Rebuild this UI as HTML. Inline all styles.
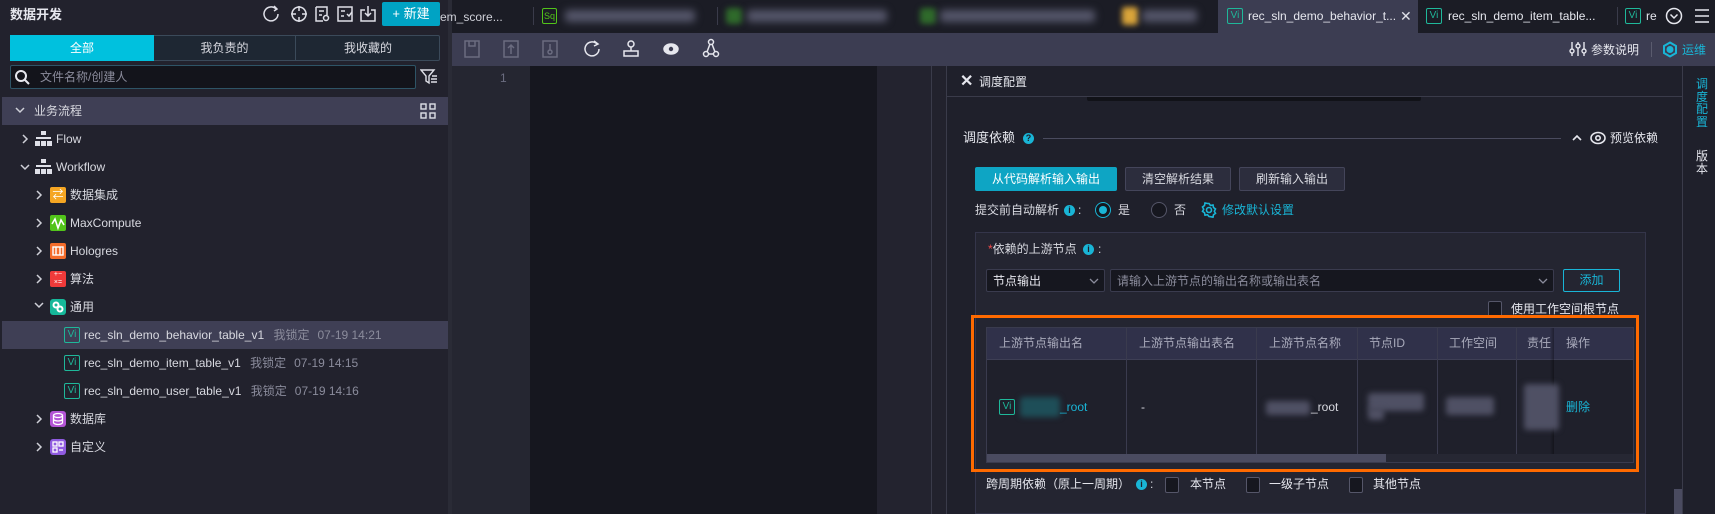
<!DOCTYPE html>
<html><head><meta charset="utf-8"><style>
*{margin:0;padding:0;box-sizing:border-box}
body{width:1715px;height:514px;overflow:hidden;background:#1f2029;font-family:"Liberation Sans","Noto Sans CJK SC",sans-serif;font-size:12px;color:#d8d9e0;position:relative}
.a{position:absolute}
.t{position:absolute;white-space:nowrap;line-height:1}
.vi{position:absolute;width:16px;height:16px;border:1px solid #1fb89a;border-radius:2px;color:#1fb89a;font-size:10px;line-height:14px;text-align:center}
.arr{position:absolute;color:#cfd0d8;font-size:11px}
.blur{position:absolute;background:#55566a;filter:blur(3px);border-radius:3px}
.cb{position:absolute;width:14px;height:16px;border:1px solid #555669;border-radius:2px;background:#16171f}
.th{position:absolute;top:327px;height:33px;line-height:33px;color:#a9aabb;font-size:12px}
</style></head><body>
<div class="a" style="left:0;top:0;width:448px;height:514px;background:#22222d"></div>
<div class="a" style="left:448px;top:0;width:4px;height:514px;background:#2a2b36"></div>
<div class="t" style="left:10px;top:8px;font-size:13px;font-weight:bold;color:#e6e7ee">数据开发</div>
<svg class="a" style="left:262px;top:4px" width="120" height="20" fill="none" stroke="#dfe0e8" stroke-width="1.5">
<path d="M14 5a7 7 0 1 0 2 5"/><path d="M12 2l3 3-3 2"/>
<circle cx="37" cy="10" r="7"/><path d="M37 2v5M37 13v5M29 10h5M40 10h5"/>
<path d="M54 3h11v8M54 3v14h7M57 7h5M57 11h3"/><circle cx="64" cy="14" r="2.5"/>
<rect x="76" y="3" width="14" height="14"/><path d="M79 7h4M79 12h3M85 10l2 2 3-4"/>
<path d="M103 6h-4v11h14V6h-4M106 2v10M103 9l3 3 3-3"/>
</svg>
<div class="a" style="left:382px;top:2px;width:58px;height:24px;background:#00a3c4;border-radius:2px;color:#fff;font-size:13px;line-height:24px;text-align:center">+ 新建</div>
<div class="a" style="left:10px;top:35px;width:430px;height:26px;border:1px solid #3b4a5a;background:#1e2733;border-radius:2px"></div>
<div class="a" style="left:10px;top:35px;width:144px;height:26px;background:#00c1de;color:#fff;text-align:center;line-height:26px;font-size:12px">全部</div>
<div class="a" style="left:154px;top:35px;width:142px;height:26px;border-right:1px solid #3b4a5a;text-align:center;line-height:26px">我负责的</div>
<div class="a" style="left:296px;top:35px;width:144px;height:26px;text-align:center;line-height:26px">我收藏的</div>
<div class="a" style="left:10px;top:65px;width:406px;height:24px;border:1px solid #2e5466;background:#13141b;border-radius:2px"></div>
<svg class="a" style="left:14px;top:69px" width="16" height="16" fill="none" stroke="#e6e7ee" stroke-width="2"><circle cx="7" cy="7" r="5"/><path d="M11 11l4 4"/></svg>
<div class="t" style="left:40px;top:71px;color:#8b8c9c">文件名称/创建人</div>
<svg class="a" style="left:420px;top:69px" width="18" height="16" fill="none" stroke="#dfe0e8" stroke-width="1.4"><path d="M1 1h13l-5 6v7l-3-2V7z"/><path d="M11 10h6M11 13h6M12 7h5"/></svg>
<div class="a" style="left:2px;top:97px;width:446px;height:28px;background:#3f3f55"></div>
<svg class="a" style="left:14px;top:104px" width="12" height="12" fill="none" stroke="#cfd0d8" stroke-width="1.5"><path d="M2 4l4 4 4-4"/></svg>
<div class="t" style="left:34px;top:105px;font-size:12px">业务流程</div>
<svg class="a" style="left:420px;top:103px" width="16" height="16" fill="none" stroke="#dfe0e8" stroke-width="1.4"><rect x="1" y="1" width="5" height="5"/><rect x="10" y="1" width="5" height="5"/><rect x="1" y="10" width="5" height="5"/><rect x="10" y="10" width="5" height="5"/></svg>
<svg class="a" style="left:0;top:120px" width="100" height="340" fill="none" stroke="#cfd0d8" stroke-width="1.5">
<path d="M23 15l4 4-4 4"/><path d="M21 45l4 4 4-4"/>
<path d="M37 71l4 4-4 4"/><path d="M37 99l4 4-4 4"/><path d="M37 127l4 4-4 4"/><path d="M37 155l4 4-4 4"/><path d="M35 183l4 4 4-4"/>
<path d="M37 295l4 4-4 4"/><path d="M37 323l4 4-4 4"/>
</svg>
<svg class="a" style="left:35px;top:131px" width="17" height="44" fill="#dfe0e8"><rect x="6" y="0" width="5" height="4"/><rect x="1" y="6" width="15" height="2"/><rect x="0" y="10" width="5" height="5"/><rect x="6" y="10" width="5" height="5"/><rect x="12" y="10" width="5" height="5"/>
<g transform="translate(0,28)"><rect x="6" y="0" width="5" height="4"/><rect x="1" y="6" width="15" height="2"/><rect x="0" y="10" width="5" height="5"/><rect x="6" y="10" width="5" height="5"/><rect x="12" y="10" width="5" height="5"/></g></svg>
<div class="t" style="left:56px;top:133px">Flow</div>
<div class="t" style="left:56px;top:161px">Workflow</div>
<div class="a" style="left:50px;top:187px;width:16px;height:16px;background:#f5a623;border-radius:2px;color:#fff;font-size:11px;line-height:16px;text-align:center">⇄</div>
<div class="t" style="left:70px;top:189px">数据集成</div>
<div class="a" style="left:50px;top:215px;width:16px;height:16px;background:#52c41a;border-radius:2px"></div>
<svg class="a" style="left:50px;top:215px" width="16" height="16" fill="none" stroke="#fff" stroke-width="1.6"><path d="M2 9l3-5 3 9 3-8 3 5"/></svg>
<div class="t" style="left:70px;top:217px">MaxCompute</div>
<div class="a" style="left:50px;top:243px;width:16px;height:16px;background:#f56c2a;border-radius:2px"></div>
<svg class="a" style="left:50px;top:243px" width="16" height="16" fill="none" stroke="#fff" stroke-width="1.4"><rect x="3" y="4" width="10" height="8"/><path d="M6 4v8M10 4v8"/></svg>
<div class="t" style="left:70px;top:245px">Hologres</div>
<div class="a" style="left:50px;top:271px;width:16px;height:16px;background:#f03a3a;border-radius:2px;color:#fff;font-size:7px;line-height:8px;text-align:center">+−<br>×=</div>
<div class="t" style="left:70px;top:273px">算法</div>
<div class="a" style="left:50px;top:299px;width:16px;height:16px;background:#16b89a;border-radius:3px"></div>
<svg class="a" style="left:50px;top:299px" width="16" height="16" fill="none" stroke="#fff" stroke-width="2"><circle cx="6" cy="6" r="2.5"/><circle cx="10" cy="10" r="2.5"/></svg>
<div class="t" style="left:70px;top:301px">通用</div>
<div class="a" style="left:2px;top:321px;width:446px;height:28px;background:#3f3f55"></div>
<div class="vi" style="left:64px;top:327px">Vi</div>
<div class="t" style="left:84px;top:329px">rec_sln_demo_behavior_table_v1 <span style="color:#8b8c9c;margin-left:6px">我锁定</span><span style="color:#8b8c9c;margin-left:8px">07-19 14:21</span></div>
<div class="vi" style="left:64px;top:355px">Vi</div>
<div class="t" style="left:84px;top:357px">rec_sln_demo_item_table_v1 <span style="color:#8b8c9c;margin-left:6px">我锁定</span><span style="color:#8b8c9c;margin-left:8px">07-19 14:15</span></div>
<div class="vi" style="left:64px;top:383px">Vi</div>
<div class="t" style="left:84px;top:385px">rec_sln_demo_user_table_v1 <span style="color:#8b8c9c;margin-left:6px">我锁定</span><span style="color:#8b8c9c;margin-left:8px">07-19 14:16</span></div>
<div class="a" style="left:50px;top:411px;width:16px;height:16px;background:#b455d6;border-radius:3px"></div>
<svg class="a" style="left:50px;top:411px" width="16" height="16" fill="none" stroke="#fff" stroke-width="1.3"><ellipse cx="8" cy="4.5" rx="4.5" ry="2"/><path d="M3.5 4.5v7c0 1 2 2 4.5 2s4.5-1 4.5-2v-7M3.5 8c0 1 2 2 4.5 2s4.5-1 4.5-2"/></svg>
<div class="t" style="left:70px;top:413px">数据库</div>
<div class="a" style="left:50px;top:439px;width:16px;height:16px;background:#8f5be0;border-radius:3px"></div>
<svg class="a" style="left:50px;top:439px" width="16" height="16" fill="none" stroke="#fff" stroke-width="1.3"><rect x="3" y="3" width="4" height="4"/><rect x="9" y="3" width="4" height="4"/><rect x="3" y="9" width="4" height="4"/><path d="M9 11h4"/></svg>
<div class="t" style="left:70px;top:441px">自定义</div>
<div class="a" style="left:452px;top:0;width:1263px;height:33px;background:#1b1c25"></div>
<div class="t" style="left:440px;top:11px;color:#cfd0d8">em_score...</div>
<div class="a" style="left:533px;top:7px;width:1px;height:18px;background:#3a3b4a"></div>
<div class="a" style="left:542px;top:8px;width:15px;height:16px;border:1px solid #52c41a;border-radius:2px;color:#52c41a;font-size:9px;line-height:14px;text-align:center">Sq</div>
<div class="blur" style="left:565px;top:10px;width:130px;height:12px;filter:blur(4px)"></div>
<div class="a" style="left:717px;top:7px;width:1px;height:18px;background:#3a3b4a"></div>
<div class="blur" style="left:726px;top:8px;width:16px;height:16px;background:#2f6a2b"></div>
<div class="blur" style="left:747px;top:10px;width:140px;height:12px;filter:blur(4px)"></div>
<div class="blur" style="left:920px;top:8px;width:16px;height:16px;background:#2f6a2b"></div>
<div class="blur" style="left:940px;top:10px;width:155px;height:12px;filter:blur(4px)"></div>
<div class="blur" style="left:1122px;top:7px;width:16px;height:18px;background:#d9a43a"></div>
<div class="blur" style="left:1142px;top:10px;width:55px;height:12px;filter:blur(4px)"></div>
<div class="a" style="left:1218px;top:0;width:200px;height:33px;background:#3c3d52"></div>
<div class="vi" style="left:1227px;top:8px">Vi</div>
<div class="t" style="left:1248px;top:10px;color:#e6e7ee">rec_sln_demo_behavior_t...</div>
<div class="t" style="left:1400px;top:9px;color:#dfe0e8;font-size:14px">✕</div>
<div class="vi" style="left:1426px;top:8px">Vi</div>
<div class="t" style="left:1448px;top:10px;color:#e6e7ee">rec_sln_demo_item_table...</div>
<div class="a" style="left:1617px;top:7px;width:1px;height:18px;background:#3a3b4a"></div>
<div class="vi" style="left:1625px;top:8px">Vi</div>
<div class="t" style="left:1646px;top:10px;color:#e6e7ee">re</div>
<svg class="a" style="left:1664px;top:6px" width="50" height="20" fill="none" stroke="#e6e7ee" stroke-width="1.5"><circle cx="10" cy="10" r="7.5"/><path d="M6.5 8.5l3.5 3.5 3.5-3.5"/><path d="M31 4h14M31 10h14M31 16h14"/></svg>
<div class="a" style="left:452px;top:33px;width:1263px;height:33px;background:#3c3d52"></div>
<svg class="a" style="left:462px;top:38px" width="260" height="24" fill="none" stroke-width="1.5">
<g stroke="#6b6c80"><rect x="3" y="3" width="14" height="16"/><path d="M7 3v5h6V3"/>
<rect x="42" y="3" width="14" height="16"/><path d="M49 16V7M46 10l3-3 3 3"/>
<rect x="81" y="3" width="14" height="16"/><path d="M88 6v6"/><circle cx="88" cy="14" r="2"/></g>
<g stroke="#e6e7ee"><path d="M135 6a7 7 0 1 0 2 5"/><path d="M132 3l4 3-4 2"/>
<circle cx="169" cy="6" r="3"/><path d="M169 9v4M162 13h14v5h-14z"/>
<ellipse cx="209" cy="11" rx="7" ry="5" fill="#e6e7ee"/><circle cx="209" cy="11" r="2.2" fill="#3c3d52" stroke="none"/>
<circle cx="249" cy="4" r="2.5"/><circle cx="244" cy="16" r="2.5"/><circle cx="254" cy="16" r="2.5"/><path d="M248 6l-3 8M250 6l3 8M247 16h5"/></g>
</svg>
<svg class="a" style="left:1569px;top:41px" width="18" height="16" fill="none" stroke="#e6e7ee" stroke-width="1.4"><path d="M3 1v14M9 1v14M15 1v14"/><circle cx="3" cy="10" r="2" fill="#3c3d52"/><circle cx="9" cy="5" r="2" fill="#3c3d52"/><circle cx="15" cy="10" r="2" fill="#3c3d52"/></svg>
<div class="t" style="left:1591px;top:44px;color:#e6e7ee">参数说明</div>
<div class="a" style="left:1651px;top:42px;width:1px;height:15px;background:#5a5b6e"></div>
<svg class="a" style="left:1662px;top:41px" width="16" height="17" fill="none" stroke="#19b5d6" stroke-width="2"><path d="M8 1.5l6 3.5v7l-6 3.5-6-3.5v-7z"/><circle cx="8" cy="8.5" r="2.5" fill="#19b5d6"/></svg>
<div class="t" style="left:1682px;top:44px;color:#19b5d6">运维</div>
<div class="a" style="left:452px;top:66px;width:78px;height:448px;background:#252631"></div>
<div class="t" style="left:500px;top:72px;color:#6b6c80">1</div>
<div class="a" style="left:530px;top:66px;width:347px;height:448px;background:#16171f"></div>
<div class="a" style="left:877px;top:66px;width:54px;height:448px;background:#23232f"></div>
<div class="a" style="left:931px;top:66px;width:1px;height:448px;background:#3a3b4a"></div>
<div class="a" style="left:932px;top:66px;width:14px;height:448px;background:#22222d"></div>
<div class="a" style="left:946px;top:66px;width:736px;height:448px;background:#1f202b;border-left:1px solid #3a3b4a"></div>
<div class="a" style="left:946px;top:96px;width:736px;height:1px;background:#3a3b4a"></div>
<div class="t" style="left:960px;top:74px;font-size:16px;color:#e6e7ee;font-weight:bold">✕</div>
<div class="t" style="left:979px;top:76px;color:#e6e7ee">调度配置</div>
<div class="a" style="left:1087px;top:97px;width:334px;height:4px;background:#111218;border-radius:0 0 2px 2px"></div>
<div class="t" style="left:963px;top:131px;font-size:13px;color:#e6e7ee">调度依赖</div>
<div class="a" style="left:1023px;top:133px;width:11px;height:11px;border-radius:50%;background:#19b5d6;color:#1f202b;font-size:9px;line-height:11px;text-align:center;font-weight:bold">?</div>
<div class="a" style="left:1043px;top:138px;width:518px;height:1px;background:#4a4b5e"></div>
<svg class="a" style="left:1572px;top:134px" width="10" height="8" fill="none" stroke="#e6e7ee" stroke-width="1.6"><path d="M1 6l4-4 4 4"/></svg>
<svg class="a" style="left:1590px;top:131px" width="16" height="14" fill="none" stroke="#e6e7ee" stroke-width="1.6"><ellipse cx="8" cy="7" rx="7" ry="5.5"/><circle cx="8" cy="7" r="2.2"/></svg>
<div class="t" style="left:1610px;top:132px;color:#e6e7ee">预览依赖</div>
<div class="a" style="left:975px;top:167px;width:142px;height:24px;background:#0ea5c4;border-radius:2px;color:#fff;text-align:center;line-height:24px">从代码解析输入输出</div>
<div class="a" style="left:1125px;top:167px;width:106px;height:24px;background:#2c2d3d;border:1px solid #44455a;border-radius:2px;text-align:center;line-height:22px">清空解析结果</div>
<div class="a" style="left:1239px;top:167px;width:106px;height:24px;background:#2c2d3d;border:1px solid #44455a;border-radius:2px;text-align:center;line-height:22px">刷新输入输出</div>
<div class="t" style="left:975px;top:204px">提交前自动解析</div>
<div class="a" style="left:1064px;top:205px;width:11px;height:11px;border-radius:50%;background:#19b5d6;color:#1f202b;font-size:9px;line-height:11px;text-align:center;font-weight:bold">i</div>
<div class="t" style="left:1078px;top:204px">:</div>
<div class="a" style="left:1095px;top:202px;width:16px;height:16px;border-radius:50%;border:1px solid #19b5d6;background:#16171f"></div>
<div class="a" style="left:1099px;top:206px;width:8px;height:8px;border-radius:50%;background:#19b5d6"></div>
<div class="t" style="left:1118px;top:204px">是</div>
<div class="a" style="left:1151px;top:202px;width:16px;height:16px;border-radius:50%;border:1px solid #555669;background:#16171f"></div>
<div class="t" style="left:1174px;top:204px">否</div>
<svg class="a" style="left:1201px;top:202px" width="16" height="16" fill="none" stroke="#19b5d6" stroke-width="1.6"><circle cx="8" cy="8" r="2.5"/><path d="M8 1.5l1.5 2 2.5-.5.5 2.5 2 1.5-1.2 2.2 1.2 2.2-2 1.3-.5 2.5-2.5-.5L8 14.5l-1.5-1.8-2.5.5-.5-2.5-2-1.3L2.7 7.2 1.5 5l2-1.5.5-2.5 2.5.5z"/></svg>
<div class="t" style="left:1222px;top:204px;color:#19b5d6">修改默认设置</div>
<div class="a" style="left:975px;top:232px;width:671px;height:282px;background:#242531;border:1px solid #34354a"></div>
<div class="t" style="left:988px;top:243px"><span style="color:#f04b4b">*</span>依赖的上游节点</div>
<div class="a" style="left:1083px;top:244px;width:11px;height:11px;border-radius:50%;background:#19b5d6;color:#1f202b;font-size:9px;line-height:11px;text-align:center;font-weight:bold">i</div>
<div class="t" style="left:1098px;top:243px">:</div>
<div class="a" style="left:986px;top:269px;width:119px;height:23px;background:#16171f;border:1px solid #3a3b4e;border-radius:2px"></div>
<div class="t" style="left:993px;top:275px;color:#e6e7ee">节点输出</div>
<svg class="a" style="left:1089px;top:277px" width="10" height="8" fill="none" stroke="#8b8c9c" stroke-width="1.3"><path d="M1 2l4 4 4-4"/></svg>
<div class="a" style="left:1110px;top:269px;width:444px;height:23px;background:#16171f;border:1px solid #3a3b4e;border-radius:2px"></div>
<div class="t" style="left:1117px;top:275px;color:#8b8c9c">请输入上游节点的输出名称或输出表名</div>
<svg class="a" style="left:1538px;top:277px" width="10" height="8" fill="none" stroke="#8b8c9c" stroke-width="1.3"><path d="M1 2l4 4 4-4"/></svg>
<div class="a" style="left:1563px;top:269px;width:57px;height:23px;border:1px solid #19b5d6;border-radius:2px;color:#19b5d6;text-align:center;line-height:21px">添加</div>
<div class="cb" style="left:1488px;top:301px"></div>
<div class="t" style="left:1511px;top:303px;color:#e6e7ee">使用工作空间根节点</div>
<div class="a" style="left:971px;top:315px;width:668px;height:157px;border:3px solid #ff6a00"></div>
<div class="a" style="left:986px;top:327px;width:648px;height:136px;background:#1f202b;border:1px solid #3a3b4e"></div>
<div class="a" style="left:987px;top:328px;width:646px;height:32px;background:#30314a"></div>
<div class="a" style="left:987px;top:359px;width:646px;height:1px;background:#3e3f55"></div>
<div class="a" style="left:1126px;top:328px;width:1px;height:126px;background:#3a3b4e"></div>
<div class="a" style="left:1256px;top:328px;width:1px;height:126px;background:#3a3b4e"></div>
<div class="a" style="left:1357px;top:328px;width:1px;height:126px;background:#3a3b4e"></div>
<div class="a" style="left:1437px;top:328px;width:1px;height:126px;background:#3a3b4e"></div>
<div class="a" style="left:1516px;top:328px;width:1px;height:126px;background:#3a3b4e"></div>
<div class="a" style="left:1550px;top:328px;width:4px;height:126px;background:linear-gradient(90deg,rgba(0,0,0,0),rgba(0,0,0,.35))"></div>
<div class="th" style="left:999px">上游节点输出名</div>
<div class="th" style="left:1139px">上游节点输出表名</div>
<div class="th" style="left:1269px">上游节点名称</div>
<div class="th" style="left:1369px">节点ID</div>
<div class="th" style="left:1449px">工作空间</div>
<div class="th" style="left:1527px">责任</div>
<div class="th" style="left:1566px">操作</div>
<div class="vi" style="left:999px;top:399px">Vi</div>
<div class="blur" style="left:1020px;top:397px;width:40px;height:20px;background:#1e4e58"></div>
<div class="t" style="left:1060px;top:401px;color:#19b5d6">_root</div>
<div class="t" style="left:1141px;top:401px">-</div>
<div class="blur" style="left:1266px;top:401px;width:44px;height:14px;background:#4f5064"></div>
<div class="t" style="left:1311px;top:401px">_root</div>
<div class="blur" style="left:1368px;top:393px;width:56px;height:18px;background:#4f5064"></div>
<div class="blur" style="left:1368px;top:408px;width:16px;height:12px;background:#4f5064"></div>
<div class="blur" style="left:1446px;top:397px;width:48px;height:18px;background:#4f5064"></div>
<div class="blur" style="left:1524px;top:384px;width:35px;height:46px;background:#4f5064"></div>
<div class="t" style="left:1566px;top:401px;color:#19b5d6">删除</div>
<div class="a" style="left:987px;top:454px;width:646px;height:8px;background:#262733"></div>
<div class="a" style="left:987px;top:454px;width:399px;height:8px;background:#4a4b60"></div>
<div class="t" style="left:986px;top:478px;color:#e6e7ee">跨周期依赖（原上一周期）</div>
<div class="a" style="left:1136px;top:479px;width:11px;height:11px;border-radius:50%;background:#19b5d6;color:#1f202b;font-size:9px;line-height:11px;text-align:center;font-weight:bold">i</div>
<div class="t" style="left:1150px;top:478px">:</div>
<div class="cb" style="left:1165px;top:477px"></div>
<div class="t" style="left:1190px;top:478px;color:#e6e7ee">本节点</div>
<div class="cb" style="left:1246px;top:477px"></div>
<div class="t" style="left:1269px;top:478px;color:#e6e7ee">一级子节点</div>
<div class="cb" style="left:1349px;top:477px"></div>
<div class="t" style="left:1373px;top:478px;color:#e6e7ee">其他节点</div>
<div class="a" style="left:1674px;top:489px;width:8px;height:25px;background:#4a4b60"></div>
<div class="a" style="left:1682px;top:66px;width:33px;height:448px;background:#1f202b;border-left:1px solid #3a3b4a"></div>
<div class="a" style="left:1696px;top:78px;width:14px;color:#19b5d6;font-size:12px;line-height:12.5px">调度配置</div>
<div class="a" style="left:1696px;top:150px;width:14px;color:#e6e7ee;font-size:12px;line-height:12.5px">版本</div>
</body></html>
